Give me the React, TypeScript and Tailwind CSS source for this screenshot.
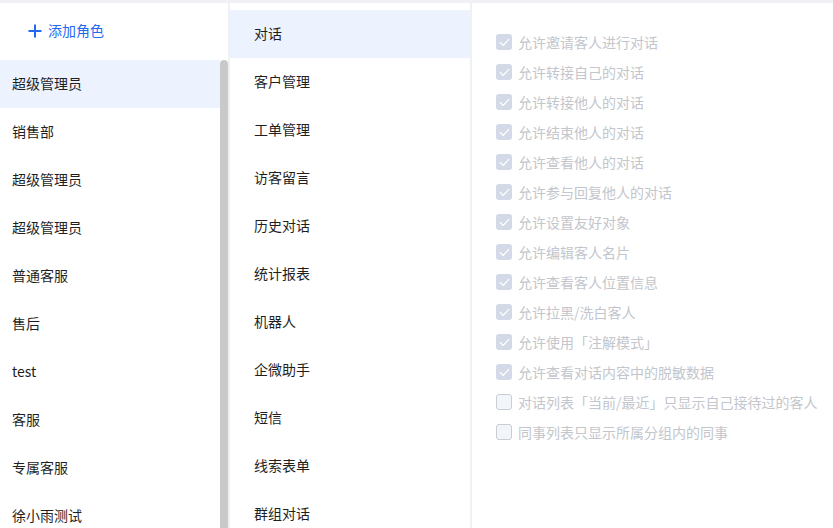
const roles = ['超级管理员', '销售部', '超级管理员', '超级管理员', '普通客服', '售后', 'test', '客服', '专属客服', '徐小雨测试'];

const modules = ['对话', '客户管理', '工单管理', '访客留言', '历史对话', '统计报表', '机器人', '企微助手', '短信', '线索表单', '群组对话'];

const perms = [
  { label: '允许邀请客人进行对话', checked: true },
  { label: '允许转接自己的对话', checked: true },
  { label: '允许转接他人的对话', checked: true },
  { label: '允许结束他人的对话', checked: true },
  { label: '允许查看他人的对话', checked: true },
  { label: '允许参与回复他人的对话', checked: true },
  { label: '允许设置友好对象', checked: true },
  { label: '允许编辑客人名片', checked: true },
  { label: '允许查看客人位置信息', checked: true },
  { label: '允许拉黑/洗白客人', checked: true },
  { label: '允许使用「注解模式」', checked: true },
  { label: '允许查看对话内容中的脱敏数据', checked: true },
  { label: '对话列表「当前/最近」只显示自己接待过的客人', checked: false },
  { label: '同事列表只显示所属分组内的同事', checked: false },
];

function Checkbox({ checked }: { checked: boolean }) {
  if (checked) {
    return (
      <span className="flex h-4 w-4 shrink-0 items-center justify-center rounded-[3px] bg-[#d3d9e6]">
        <svg width="11" height="9" viewBox="0 0 11 9" fill="none">
          <path d="M1.2 4.6 L4.2 7.4 L9.8 1.4" stroke="#fff" strokeWidth="1.3" strokeLinecap="round" strokeLinejoin="round" />
        </svg>
      </span>
    );
  }
  return <span className="h-4 w-4 shrink-0 rounded-[3px] border border-[#c9cdd4] bg-[#f2f5fa]" />;
}

export default function App() {
  return (
    <div
      className="flex h-[528px] w-[833px] flex-col overflow-hidden bg-[#eff1f5] text-[14px] text-[#1f1f1f]"
      style={{ fontFamily: '"Noto Sans CJK SC", "Noto Sans", sans-serif' }}
    >
      <div className="mt-[3px] flex min-h-0 flex-1 gap-[2px]">
        {/* Roles */}
        <div className="flex w-[228px] shrink-0 bg-white">
          <div className="w-[220px] shrink-0">
            <button className="flex h-[57px] items-center gap-[6px] pb-[2px] pl-[28px] text-[#2468f2]">
              <svg width="14" height="14" viewBox="0 0 14 14" fill="none">
                <path d="M7 0.5 V13.5 M0.5 7 H13.5" stroke="currentColor" strokeWidth="2" />
              </svg>
              <span>添加角色</span>
            </button>
            {roles.map((r, i) => (
              <div key={i} className={`flex h-12 items-center pb-[2px] pl-3 ${i === 0 ? 'bg-[#ecf2fe]' : ''}`}>
                {r}
              </div>
            ))}
          </div>
          <div className="flex w-2 flex-col pt-[57px]">
            <div className="flex-1 rounded-t-[4px] bg-[#c9c9c9]" />
          </div>
        </div>

        {/* Modules */}
        <div className="w-[240px] shrink-0 bg-white pt-[7px]">
          {modules.map((m, i) => (
            <div key={i} className={`flex h-12 items-center pb-[2px] pl-6 ${i === 0 ? 'bg-[#ecf2fe]' : ''}`}>
              {m}
            </div>
          ))}
        </div>

        {/* Permissions */}
        <div className="flex-1 bg-white pl-6 pt-[24px]">
          {perms.map((p, i) => (
            <label key={i} className="flex h-[30px] items-center gap-[6px] text-[#c3c6cc]">
              <Checkbox checked={p.checked} />
              <span>{p.label}</span>
            </label>
          ))}
        </div>
      </div>
    </div>
  );
}
